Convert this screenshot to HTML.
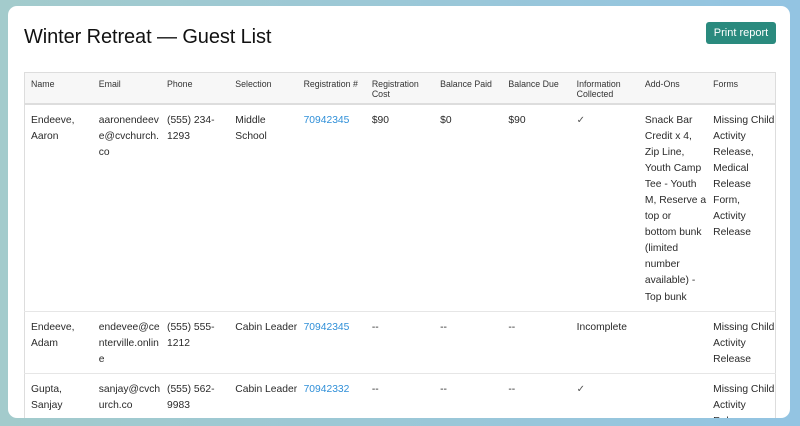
<!DOCTYPE html>
<html><head><style>
html,body{margin:0;padding:0;width:800px;height:426px;overflow:hidden;background:linear-gradient(90deg,#a3cbcc,#93c4e2);font-family:"Liberation Sans",sans-serif;}
.card{position:absolute;left:8px;top:6px;width:782px;height:412px;background:#fff;border-radius:9px;overflow:hidden;}
h1{position:absolute;left:16px;top:20px;margin:0;font-weight:normal;font-size:20px;color:#111;letter-spacing:-0.1px;}
.btn{position:absolute;left:698px;top:16px;width:70px;height:22px;background:#2a8a7e;border-radius:3px;color:#fff;font-size:11px;line-height:23px;text-align:center;}
table{position:absolute;left:16px;top:66px;width:752px;border-collapse:collapse;table-layout:fixed;border:1px solid #ddd;}
th,td{text-align:left;vertical-align:top;padding:0 6px;white-space:nowrap;overflow:hidden;color:#2a2a2a;}
th{background:#f7f7f7;font-size:8.8px;font-weight:normal;line-height:10px;height:31px;padding-top:6px;padding-bottom:0;box-sizing:border-box;border-bottom:2px solid #ddd;vertical-align:top;color:#333;}
td{font-size:10.3px;line-height:16.1px;padding-top:8px;padding-bottom:5px;border-top:1px solid #e6e6e6;}
a{color:#2f8fd8;text-decoration:none;}
.ck{color:#555;font-size:10px;}
</style></head><body>
<div class="card">
<h1>Winter Retreat — Guest List</h1>
<div class="btn">Print report</div>
<table>
<tr><th>Name</th><th>Email</th><th>Phone</th><th>Selection</th><th>Registration #</th><th>Registration<br>Cost</th><th>Balance Paid</th><th>Balance Due</th><th>Information<br>Collected</th><th>Add-Ons</th><th>Forms</th></tr>
<tr><td>Endeeve,<br>Aaron</td><td>aaronendeev<br>e@cvchurch.<br>co</td><td>(555) 234-<br>1293</td><td>Middle<br>School</td><td><a>70942345</a></td><td>$90</td><td>$0</td><td>$90</td><td class="ck">✓</td><td>Snack Bar<br>Credit x 4,<br>Zip Line,<br>Youth Camp<br>Tee - Youth<br>M, Reserve a<br>top or<br>bottom bunk<br>(limited<br>number<br>available) -<br>Top bunk</td><td>Missing Child<br>Activity<br>Release,<br>Medical<br>Release<br>Form,<br>Activity<br>Release</td></tr>
<tr><td>Endeeve,<br>Adam</td><td>endevee@ce<br>nterville.onlin<br>e</td><td>(555) 555-<br>1212</td><td>Cabin Leader</td><td><a>70942345</a></td><td>--</td><td>--</td><td>--</td><td>Incomplete</td><td></td><td>Missing Child<br>Activity<br>Release</td></tr>
<tr><td>Gupta,<br>Sanjay</td><td>sanjay@cvch<br>urch.co</td><td>(555) 562-<br>9983</td><td>Cabin Leader</td><td><a>70942332</a></td><td>--</td><td>--</td><td>--</td><td class="ck">✓</td><td></td><td>Missing Child<br>Activity<br>Release</td></tr>
</table>
</div>
</body></html>
